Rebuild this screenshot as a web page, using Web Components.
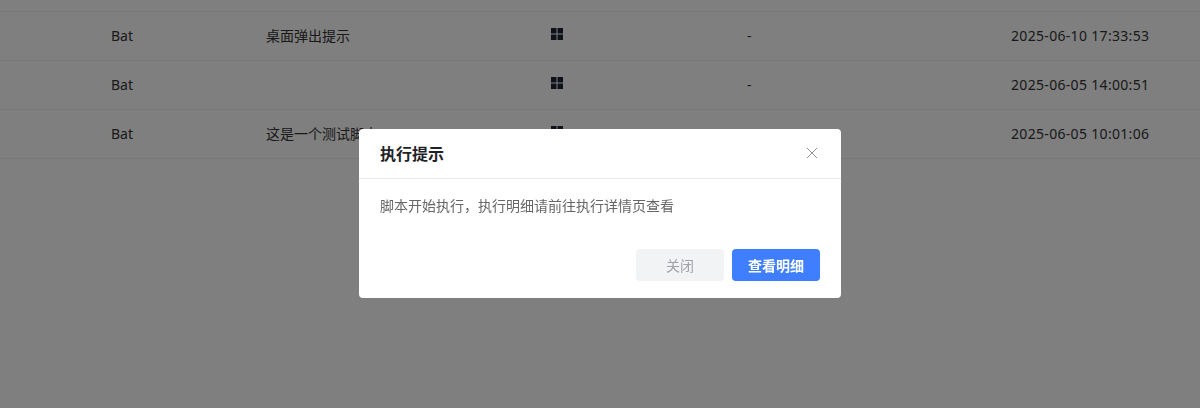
<!DOCTYPE html>
<html>
<head>
<meta charset="utf-8">
<title>执行提示</title>
<style>
  html, body { margin: 0; height: 100%; overflow: hidden; background: #fff; }
  body { font-family: "Noto Sans", "Noto Sans CJK SC", sans-serif; font-size: 14px; }
</style>
</head>
<body>
<script-table>
  <script-row type="Bat" desc="桌面弹出提示" owner="-" time="2025-06-10 17:33:53"></script-row>
  <script-row type="Bat" desc="" owner="-" time="2025-06-05 14:00:51"></script-row>
  <script-row type="Bat" desc="这是一个测试脚本" owner="-" time="2025-06-05 10:01:06"></script-row>
</script-table>
<modal-dialog heading="执行提示">
  脚本开始执行，执行明细请前往执行详情页查看
  <ui-button slot="footer" disabled>关闭</ui-button>
  <ui-button slot="footer" primary>查看明细</ui-button>
</modal-dialog>

<script>
class ScriptTable extends HTMLElement {
    connectedCallback() {
        this.attachShadow({ mode: 'open' });
        this.shadowRoot.innerHTML = `
  <style>
    :host { display: block; padding-top: 11px; }
    .rule { height: 1px; background: #eceef2; }
  </style>
  <div class="rule"></div>
  <slot></slot>
        `;
    }
}

class ScriptRow extends HTMLElement {
    connectedCallback() {
        this.attachShadow({ mode: 'open' });
        this.shadowRoot.innerHTML = `
  <style>
    :host {
      display: grid;
      grid-template-columns: 266px 284px 197px 264px 1fr;
      align-items: center;
      height: 48px;
      border-bottom: 1px solid #eceef2;
      color: #333;
      font-family: "Noto Sans", "Noto Sans CJK SC", sans-serif;
      font-size: 14px;
    }
    .type { padding-left: 111px; }
    .cell { white-space: nowrap; line-height: 22px; }
    .time { letter-spacing: 0.32px; }
    svg { display: block; margin-top: -6px; }
  </style>
  <div class="cell type">${this.getAttribute('type')}</div>
  <div class="cell">${this.getAttribute('desc')}</div>
  <div><svg width="13" height="13" viewBox="0 0 13 13" fill="#1d2230"><rect x="1" y="1" width="5.5" height="5.5"/><rect x="7.5" y="1" width="5.5" height="5.5"/><rect x="1" y="7.5" width="5.5" height="5.5"/><rect x="7.5" y="7.5" width="5.5" height="5.5"/></svg></div>
  <div class="cell">${this.getAttribute('owner')}</div>
  <div class="cell time">${this.getAttribute('time')}</div>
        `;
    }
}

class ModalDialog extends HTMLElement {
    connectedCallback() {
        this.attachShadow({ mode: 'open' });
        this.shadowRoot.innerHTML = `
  <style>
    :host {
      position: fixed;
      inset: 0;
      display: flex;
      align-items: flex-start;
      justify-content: center;
      padding-top: 129px;
      background: rgba(0, 0, 0, 0.5);
    }
    .box {
      width: 482px;
      height: 169px;
      box-sizing: border-box;
      background: #fff;
      border-radius: 4px;
      display: flex;
      flex-direction: column;
    }
    header {
      height: 50px;
      box-sizing: border-box;
      padding: 0 20px 2px 21px;
      display: flex;
      align-items: center;
      justify-content: space-between;
      border-bottom: 1px solid #e9e9eb;
      color: #1f2329;
      font-size: 16px;
      font-weight: 700;
    }
    svg { display: block; margin-right: 3px; }
    .body { flex: 1; padding: 16px 21px 0; color: #666; font-size: 14px; line-height: 22px; }
    footer { display: flex; justify-content: flex-end; gap: 8px; padding: 0 21px 17px 0; }
  </style>
  <div class="box">
    <header>
      <span>${this.getAttribute('heading')}</span>
      <svg width="12" height="12" viewBox="0 0 12 12" fill="none" stroke="#909399" stroke-width="1"><path d="M1 1 L11 11 M11 1 L1 11"/></svg>
    </header>
    <div class="body"><slot></slot></div>
    <footer><slot name="footer"></slot></footer>
  </div>
        `;
    }
}

class UiButton extends HTMLElement {
    connectedCallback() {
        this.attachShadow({ mode: 'open' });
        this.shadowRoot.innerHTML = `
  <style>
    :host {
      display: flex;
      align-items: center;
      justify-content: center;
      width: 88px;
      height: 32px;
      border-radius: 4px;
      font-size: 14px;
      background: #f2f3f5;
      color: #9fa2a8;
    }
    :host([primary]) { background: #3f7fff; color: #fff; font-weight: 700; }
  </style>
  <slot></slot>
        `;
    }
}

customElements.define('script-table', ScriptTable);
customElements.define('script-row', ScriptRow);
customElements.define('modal-dialog', ModalDialog);
customElements.define('ui-button', UiButton);
</script>
</body>
</html>
